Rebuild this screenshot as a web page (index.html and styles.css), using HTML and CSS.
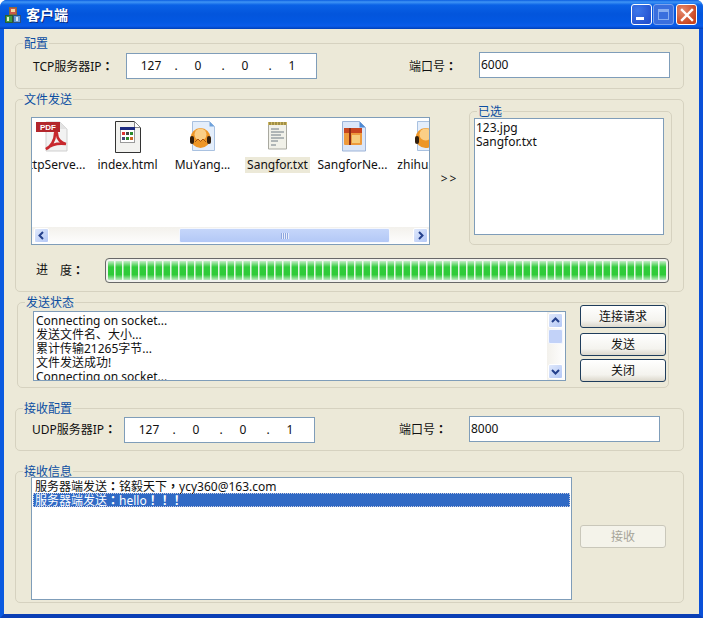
FILE: index.html
```html
<!DOCTYPE html>
<html lang="zh-Hans">
<head>
<meta charset="utf-8">
<title>客户端</title>
<link rel="stylesheet" href="styles.css">
</head>
<body>
<div class="window">
  <header class="titlebar">
    <svg class="app-icon" width="18" height="18" viewBox="0 0 18 18"><rect x="5.500" y="1.500" width="7" height="7" fill="#c9574a" stroke="#8a6a3a"/><rect x="7" y="3" width="4" height="3" fill="#f4d9a0"/><rect x="1.500" y="9.500" width="7" height="7" fill="#3f9a45" stroke="#2c5d33"/><rect x="9.500" y="9.500" width="7" height="7" fill="#6a9bd6" stroke="#2f4f7d"/><rect x="3" y="11" width="2" height="4" fill="#e8f2c8"/><rect x="12" y="11" width="2" height="4" fill="#dce9f7"/></svg>
    <span class="title">客户端</span>
    <div class="controls">
      <span class="ctl ctl-min"><i></i></span>
      <span class="ctl ctl-max"><i></i></span>
      <span class="ctl ctl-close"><svg width="14" height="14" viewBox="0 0 14 14"><path d="M2 2l10 10M12 2L2 12" stroke="#fff" stroke-width="2.400" stroke-linecap="square"/></svg></span>
    </div>
  </header>

  <main class="client">
    <section class="group g-config">
      <h2 class="legend">配置</h2>
      <span class="label l-ip">TCP服务器IP<span class="p" lang="zh-Hant">：</span></span>
      <div class="field ip"><span>127</span><b>.</b><span>0</span><b>.</b><span>0</span><b>.</b><span>1</span></div>
      <span class="label l-port">端口号<span class="p" lang="zh-Hant">：</span></span>
      <div class="field port">6000</div>
    </section>

    <section class="group g-send">
      <h2 class="legend">文件发送</h2>
      <div class="send-top">
        <div class="files">
          <div class="file-row">
            <figure class="file">
              <svg width="36" height="32" viewBox="0 0 36 32"><path d="M11 1h14l7 7v22H11z" fill="#f2f2f2" stroke="#cfcfcf"/><path d="M25 1l7 7h-7z" fill="#e2e2e2"/><rect x="1" y="1" width="24" height="10" fill="#b3262c"/><text x="13" y="9" class="pdf-t" text-anchor="middle">PDF</text><path d="M11 28c5-2 9-9 9-15 0-2 2-2 2 0 0 5 4 9 9 10-7-1-14 0-20 5z" fill="none" stroke="#c8282e" stroke-width="2.600"/></svg>
              <figcaption>HttpServe...</figcaption>
            </figure>
            <figure class="file">
              <svg width="36" height="32" viewBox="0 0 36 32"><path d="M5.500 .5h19l6 6v25h-25z" fill="#f2f2ef" stroke="#333"/><path d="M24.500 .5l6 6h-6z" fill="#fff" stroke="#888"/><rect x="10.500" y="6.500" width="14" height="15" fill="#fff" stroke="#9a9a9a"/><rect x="10" y="6" width="15" height="3" fill="#1c2a80"/><rect x="12" y="11" width="3" height="3" fill="#d33"/><rect x="16" y="11" width="3" height="3" fill="#444"/><rect x="20" y="11" width="3" height="3" fill="#2a8a2a"/><rect x="12" y="16" width="3" height="3" fill="#447"/><rect x="16" y="16" width="3" height="3" fill="#2a8a2a"/><rect x="20" y="16" width="3" height="3" fill="#c62"/></svg>
              <figcaption>index.html</figcaption>
            </figure>
            <figure class="file">
              <svg width="36" height="32" viewBox="0 0 36 32"><path d="M7.500 .5h17l5 5v24h-22z" fill="#e4eefb" stroke="#a9c1e0"/><path d="M24.500 .5l5 5h-5z" fill="#6ea2dc"/><circle cx="15.500" cy="17" r="10" fill="#ee9626"/><circle cx="15.500" cy="13.500" r="6" fill="#fbcf86"/><rect x="5" y="15" width="4" height="8" rx="2" fill="#33200e"/><rect x="22" y="15" width="4" height="8" rx="2" fill="#33200e"/><path d="M10 21l3-3 2.500 2.500L18 18l3 3" fill="none" stroke="#a8550f"/></svg>
              <figcaption>MuYang...</figcaption>
            </figure>
            <figure class="file">
              <svg width="36" height="32" viewBox="0 0 36 32"><path d="M8.500 2.500h18v25.500h-18z" fill="#f1f1e9" stroke="#a9a9a0"/><rect x="8" y="1" width="19" height="3" fill="#cdb762"/><path d="M10 1v3M13 1v3M16 1v3M19 1v3M22 1v3M25 1v3" stroke="#77692c"/><path d="M11 8h8M11 11h13M11 14h10M11 17h13M11 20h7M11 24h5" stroke="#6f7a84"/></svg>
              <figcaption class="selected">Sangfor.txt</figcaption>
            </figure>
            <figure class="file">
              <svg width="36" height="32" viewBox="0 0 36 32"><path d="M7.500 .5h17l6 6v23.500h-23z" fill="#dbe6f8" stroke="#9db4d8"/><path d="M24.500 .5l6 6h-6z" fill="#4f8ad4"/><rect x="9" y="7" width="18" height="17" rx="1" fill="#ee9a3c"/><rect x="9" y="7" width="18" height="5" fill="#c8451f"/><path d="M15 7v17" stroke="#8c2c16" stroke-width="2"/><rect x="17" y="14" width="8" height="8" fill="#f6cd7c"/></svg>
              <figcaption>SangforNe...</figcaption>
            </figure>
            <figure class="file">
              <svg width="36" height="32" viewBox="0 0 36 32"><path d="M7.500 .5h17l5 5v24h-22z" fill="#e4eefb" stroke="#a9c1e0"/><circle cx="15.500" cy="17" r="10" fill="#ee9626"/><circle cx="15.500" cy="13.500" r="6" fill="#fbcf86"/><rect x="5" y="15" width="4" height="8" rx="2" fill="#33200e"/></svg>
              <figcaption>zhihu.html</figcaption>
            </figure>
          </div>
          <div class="hscroll">
            <span class="sbtn"><svg width="9" height="9" viewBox="0 0 9 9"><path d="M6 1L2.500 4.500 6 8" fill="none" stroke="#24408c" stroke-width="2"/></svg></span>
            <span class="hthumb"><i></i></span>
            <span class="sbtn"><svg width="9" height="9" viewBox="0 0 9 9"><path d="M3 1l3.500 3.500L3 8" fill="none" stroke="#24408c" stroke-width="2"/></svg></span>
          </div>
        </div>
        <span class="arrows">&gt;&gt;</span>
        <section class="group g-selected">
          <h3 class="legend">已选</h3>
          <div class="picked">123.jpg<br>Sangfor.txt</div>
        </section>
      </div>
      <div class="send-bottom">
        <span class="label l-progress"><span>进</span><span>度<span class="p" lang="zh-Hant">：</span></span></span>
        <div class="progress"></div>
      </div>
    </section>

    <section class="group g-status">
      <h2 class="legend">发送状态</h2>
      <div class="log">
        <div class="log-text">Connecting on socket...<br>发送文件名、大小...<br>累计传输21265字节...<br>文件发送成功!<br>Connecting on socket...</div>
        <div class="vscroll">
          <span class="sbtn"><svg width="9" height="9" viewBox="0 0 9 9"><path d="M1 6l3.500-3.500L8 6" fill="none" stroke="#24408c" stroke-width="2"/></svg></span>
          <span class="vthumb"></span>
          <span class="sbtn sbtn-end"><svg width="9" height="9" viewBox="0 0 9 9"><path d="M1 3l3.500 3.500L8 3" fill="none" stroke="#24408c" stroke-width="2"/></svg></span>
        </div>
      </div>
      <div class="actions">
        <button class="btn" type="button">连接请求</button>
        <button class="btn" type="button">发送</button>
        <button class="btn" type="button">关闭</button>
      </div>
    </section>

    <section class="group g-recv">
      <h2 class="legend">接收配置</h2>
      <span class="label l-ip">UDP服务器IP<span class="p" lang="zh-Hant">：</span></span>
      <div class="field ip"><span>127</span><b>.</b><span>0</span><b>.</b><span>0</span><b>.</b><span>1</span></div>
      <span class="label l-port">端口号<span class="p" lang="zh-Hant">：</span></span>
      <div class="field port">8000</div>
    </section>

    <section class="group g-info">
      <h2 class="legend">接收信息</h2>
      <div class="messages">
        <div class="msg">服务器端发送<span class="p" lang="zh-Hant">：</span>铭毅天下<span class="p" lang="zh-Hant">，</span>ycy360@163.com</div>
        <div class="msg msg-on">服务器端发送<span class="p" lang="zh-Hant">：</span>hello<span class="p" lang="zh-Hant">！！！</span></div>
      </div>
      <button class="btn btn-off" type="button" disabled>接收</button>
    </section>
  </main>
</div>
</body>
</html>
```

FILE: styles.css
```css
* { box-sizing: border-box; margin: 0; padding: 0; }
html, body { width: 703px; height: 618px; overflow: hidden; }
body {
  font-family: "Noto Sans", "Noto Sans CJK SC", sans-serif;
  font-size: 12px;
  line-height: 14px;
  color: #111;
  background: #fff;
}
.p { font-family: "Noto Sans CJK TC", sans-serif; font-weight: 700; }
.window {
  width: 703px;
  height: 618px;
  background: #0a50dc;
  border-radius: 7px 7px 0 0;
  display: flex;
  flex-direction: column;
  border-bottom: 4px solid #0a3fb5;
  border-left: 4px solid #0a5ae0;
  border-right: 4px solid #0a50d8;
}
.titlebar {
  height: 29px;
  margin: 0 -4px;
  padding: 0 6px 0 4px;
  display: flex;
  align-items: center;
  border-radius: 7px 7px 0 0;
  background: linear-gradient(#0a5de0 0, #3f95f5 2px, #0a62e6 5px, #0355dc 14px, #0358e2 22px, #0a5cea 26px, #0040b8 29px);
}
.app-icon { flex: none; margin-top: 1px; }
.title {
  margin-left: 4px;
  font-size: 14px;
  font-weight: 700;
  color: #fff;
  text-shadow: 1px 1px #0a2a80;
}
.controls { margin-left: auto; display: flex; gap: 1px; }
.ctl {
  width: 21px;
  height: 21px;
  border: 1px solid #fff;
  border-radius: 3px;
  display: flex;
  align-items: center;
  justify-content: center;
}
.ctl-min { background: radial-gradient(circle at 30% 30%, #3d78ea, #2452cf 80%); }
.ctl-min i { width: 8px; height: 3px; background: #fff; margin-top: 8px; margin-right: 3px; }
.ctl-max { background: #3a6fde; border-color: #7ba3ee; }
.ctl-max i { width: 11px; height: 11px; border: 1px solid #88aef0; border-top-width: 3px; }
.ctl-close { background: radial-gradient(circle at 30% 30%, #e58a6e, #c9451f 75%); margin-left: 1px; }

.client {
  flex: 1;
  background: #ece9d8;
  padding: 14px 0 0 11px;
}
.group {
  position: relative;
  border: 1px solid #d6d2c0;
  border-radius: 5px;
  width: 669px;
}
.legend {
  position: absolute;
  left: 7px;
  top: -7px;
  padding: 0 1px;
  font: inherit;
  line-height: 14px;
  color: #0b4ea2;
  background: #ece9d8;
}
.label { flex: none; }
.field {
  flex: none;
  background: #fff;
  border: 1px solid #7f9db9;
  width: 191px;
  height: 26px;
}

.g-config, .g-recv {
  height: 46px;
  display: flex;
  align-items: center;
}
.g-config { padding-left: 17px; }
.g-recv { padding-left: 16px; margin-top: 20px; height: 43px; }
.l-ip { width: 93px; }
.g-recv .l-ip { width: 92px; }
.l-port { width: 70px; margin-left: 92px; }
.g-recv .l-port { margin-left: 84px; }
.ip {
  display: flex;
  align-items: center;
  padding-left: 9px;
}
.ip span { width: 30px; text-align: center; }
.ip b { width: 17px; padding-left: 3px; text-align: center; font-weight: 400; }
.port { display: flex; align-items: center; padding-left: 1px; margin-top: -2px; }

.g-send { margin-top: 10px; height: 193px; padding: 10px 0 0 15px; }
.send-top { display: flex; align-items: flex-start; }
.files {
  margin-top: 7px;
  width: 399px;
  height: 128px;
  background: #fff;
  border: 1px solid #7f9db9;
  display: flex;
  flex-direction: column;
  overflow: hidden;
}
.file-row { flex: 1; display: flex; margin-left: -17px; min-height: 0; }
.file { flex: 0 0 75px; display: flex; flex-direction: column; align-items: center; padding-top: 3px; }
.file svg { flex: none; }
.file figcaption { margin-top: 4px; padding: 1px 2px; white-space: nowrap; line-height: 14px; }
.file figcaption.selected { background: #ece9d8; }
.pdf-t { font: 700 8px "Liberation Sans", sans-serif; fill: #fff; }
.hscroll {
  flex: none;
  height: 17px;
  background: linear-gradient(#f3f1ec, #fefefe);
  display: flex;
  align-items: center;
  padding: 0 1px 0 2px;
}
.sbtn {
  flex: none;
  width: 15px;
  height: 15px;
  border: 1px solid #fff;
  border-radius: 2px;
  background: linear-gradient(135deg, #dfe8fb, #b4c8f6);
  display: flex;
  align-items: center;
  justify-content: center;
}
.hthumb {
  margin-left: 130px;
  width: 211px;
  height: 15px;
  border: 1px solid #f4f7fe;
  border-radius: 2px;
  background: linear-gradient(#c5d6fa, #b3c8f6);
  display: flex;
  align-items: center;
  justify-content: center;
}
.hthumb i { width: 8px; height: 6px; background: repeating-linear-gradient(90deg, #8ea7df 0 1px, #e8eefc 1px 2px); }
.hthumb + .sbtn { margin-left: auto; }
.arrows { width: 39px; margin-top: 62px; text-align: center; letter-spacing: 2px; }
.g-selected { width: 203px; height: 134px; margin-top: 1px; }
.picked {
  position: absolute;
  left: 4px;
  top: 6px;
  width: 190px;
  height: 117px;
  background: #fff;
  border: 1px solid #7f9db9;
  padding: 2px 1px 1px;
}
.send-bottom { display: flex; align-items: center; margin-top: 13px; }
.l-progress { width: 73px; display: flex; gap: 12px; padding-left: 5px; }
.progress {
  margin-left: 1px;
  width: 564px;
  height: 25px;
  border: 1px solid #686868;
  border-radius: 4px;
  background:
    repeating-linear-gradient(90deg, rgba(255,255,255,.85) 0 1px, rgba(255,255,255,.45) 1px 2px, transparent 2px 8px),
    linear-gradient(#c9eecc 8%, #31cb3b 35%, #2ecb38 68%, #bfeac3 92%);
  box-shadow: inset 0 0 0 2px #f2f2ee;
}

.g-status {
  margin: 10px 0 0 2px;
  width: 652px;
  height: 86px;
}
.log {
  position: absolute;
  left: 15px;
  top: 8px;
  width: 533px;
  height: 70px;
  background: #fff;
  border: 1px solid #7f9db9;
  overflow: hidden;
}
.log-text { padding: 2px; line-height: 14px; }
.vscroll {
  position: absolute;
  right: 0;
  top: 0;
  width: 18px;
  height: 68px;
  padding: 1px;
  background: linear-gradient(90deg, #f3f1ec, #fefefe);
  display: flex;
  flex-direction: column;
}
.vthumb {
  margin-top: 1px;
  width: 15px;
  height: 15px;
  border: 1px solid #f4f7fe;
  border-radius: 2px;
  background: #c2d2f8;
}
.sbtn-end { margin-top: auto; }
.actions {
  position: absolute;
  left: 562px;
  top: 2px;
  display: flex;
  flex-direction: column;
}
.btn {
  font: inherit;
  width: 86px;
  height: 23px;
  color: #111;
  border: 1px solid #1f3d5c;
  border-radius: 3px;
  background: linear-gradient(#fff, #f4f3ee 70%, #dcd8cc);
}
.actions .btn + .btn { margin-top: 5px; }
.actions .btn:last-child { margin-top: 3px; }

.g-info { margin-top: 20px; height: 132px; }
.messages {
  position: absolute;
  left: 15px;
  top: 5px;
  width: 541px;
  height: 123px;
  background: #fff;
  border: 1px solid #7f9db9;
  padding: 1px 1px 0;
}
.msg { height: 14px; padding-left: 2px; line-height: 14px; white-space: nowrap; }
.msg-on { background: #316ac5; color: #fff; outline: 1px dotted #ccd; outline-offset: -1px; }
.btn-off {
  position: absolute;
  left: 564px;
  top: 53px;
  color: #a6a498;
  border-color: #c9c7ba;
  background: #f4f3ea;
}
```
